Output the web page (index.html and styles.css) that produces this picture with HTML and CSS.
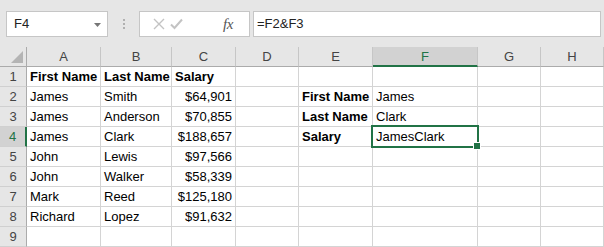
FILE: index.html
```html
<!DOCTYPE html>
<html>
<head>
<meta charset="utf-8">
<link rel="stylesheet" href="styles.css">
</head>
<body>
<div class="toolbar">
  <div class="namebox">
    <span class="name">F4</span>
    <svg class="dd" width="7" height="4" viewBox="0 0 7 4"><path d="M0 0H7L3.5 4Z" fill="#767676"/></svg>
  </div>
  <div class="grip"><i></i><i></i><i></i></div>
  <div class="fxbox">
    <svg class="ic" width="12" height="12" viewBox="0 0 12 12"><path d="M1 1L11 11M11 1L1 11" stroke="#c3c3c3" stroke-width="1.4" fill="none"/></svg>
    <svg class="ic chk" width="13" height="12" viewBox="0 0 13 12"><path d="M1 6.5L4.5 10L12 1.5" stroke="#c3c3c3" stroke-width="2" fill="none"/></svg>
    <span class="fx">fx</span>
  </div>
  <div class="formula">=F2&amp;F3</div>
</div>
<div class="sheet">
  <div class="grid">
    <div class="corner"><svg width="12" height="12" viewBox="0 0 12 12"><path d="M12 0V12H0Z" fill="#b4b4b4"/></svg></div>
    <div class="h">A</div><div class="h">B</div><div class="h">C</div><div class="h">D</div><div class="h">E</div><div class="h sel">F</div><div class="h">G</div><div class="h">H</div>

    <div class="r">1</div><div class="c b">First Name</div><div class="c b">Last Name</div><div class="c b">Salary</div><div class="c"></div><div class="c"></div><div class="c"></div><div class="c"></div><div class="c"></div>
    <div class="r">2</div><div class="c">James</div><div class="c">Smith</div><div class="c n">$64,901</div><div class="c"></div><div class="c b">First Name</div><div class="c">James</div><div class="c"></div><div class="c"></div>
    <div class="r">3</div><div class="c">James</div><div class="c">Anderson</div><div class="c n">$70,855</div><div class="c"></div><div class="c b">Last Name</div><div class="c">Clark</div><div class="c"></div><div class="c"></div>
    <div class="r rsel">4</div><div class="c">James</div><div class="c">Clark</div><div class="c n">$188,657</div><div class="c"></div><div class="c b">Salary</div><div class="c">JamesClark</div><div class="c"></div><div class="c"></div>
    <div class="r">5</div><div class="c">John</div><div class="c">Lewis</div><div class="c n">$97,566</div><div class="c"></div><div class="c"></div><div class="c"></div><div class="c"></div><div class="c"></div>
    <div class="r">6</div><div class="c">John</div><div class="c">Walker</div><div class="c n">$58,339</div><div class="c"></div><div class="c"></div><div class="c"></div><div class="c"></div><div class="c"></div>
    <div class="r">7</div><div class="c">Mark</div><div class="c">Reed</div><div class="c n">$125,180</div><div class="c"></div><div class="c"></div><div class="c"></div><div class="c"></div><div class="c"></div>
    <div class="r">8</div><div class="c">Richard</div><div class="c">Lopez</div><div class="c n">$91,632</div><div class="c"></div><div class="c"></div><div class="c"></div><div class="c"></div><div class="c"></div>
    <div class="r">9</div><div class="c"></div><div class="c"></div><div class="c"></div><div class="c"></div><div class="c"></div><div class="c"></div><div class="c"></div><div class="c"></div>
  </div>
  <div class="selbox"></div>
  <div class="handle"></div>
</div>
</body>
</html>
```

FILE: styles.css
```css
html, body {
  margin: 0;
  padding: 0;
  background: #ffffff;
  overflow: hidden;
}
body {
  width: 604px;
  height: 247px;
  font-family: "Liberation Sans", Arial, sans-serif;
  font-size: 13px;
  color: #000;
}
.toolbar {
  height: 47px;
  box-sizing: border-box;
  background: #e6e6e6;
  display: flex;
  align-items: flex-start;
  padding: 11px 3px 0 6px;
}
.namebox {
  width: 102px;
  height: 26px;
  box-sizing: border-box;
  background: #fff;
  border: 1px solid #c6c6c6;
  display: flex;
  align-items: center;
  justify-content: space-between;
  padding: 0 6px 0 7px;
  color: #222;
}
.name { line-height: 24px; }
.dd { margin-top: 1px; }
.grip {
  width: 31px;
  height: 26px;
  display: flex;
  flex-direction: column;
  align-items: center;
  justify-content: center;
  gap: 2px;
}
.grip i {
  display: block;
  width: 2px;
  height: 2px;
  background: #b0b0b0;
}
.fxbox {
  width: 111px;
  height: 26px;
  box-sizing: border-box;
  background: #fff;
  border: 1px solid #c6c6c6;
  display: flex;
  align-items: center;
  padding-left: 13px;
}
.chk { margin-left: 5px; }
.fx {
  margin-left: 40px;
  font-family: "Liberation Serif", "Times New Roman", serif;
  font-style: italic;
  font-size: 15px;
  color: #555;
  letter-spacing: -0.5px;
}
.formula {
  flex: 1;
  margin-left: 3px;
  height: 26px;
  box-sizing: border-box;
  background: #fff;
  border: 1px solid #c6c6c6;
  padding-left: 3px;
  line-height: 24px;
  color: #222;
}
.sheet {
  position: relative;
}
.grid {
  display: grid;
  grid-template-columns: 27px 74px 71px 64px 63px 74px 105px 63px 1fr;
  grid-auto-rows: 20px;
}
.grid > div {
  box-sizing: border-box;
  white-space: nowrap;
  overflow: hidden;
  line-height: 19px;
}
.corner {
  background: #e6e6e6;
  border-right: 1px solid #ababab;
  border-bottom: 1px solid #ababab;
  display: flex;
  align-items: flex-end;
  justify-content: flex-end;
  padding: 0 3px 3px 0;
}
.corner svg { display: block; }
.h {
  background: #e6e6e6;
  border-right: 1px solid #c6c6c6;
  border-bottom: 1px solid #ababab;
  text-align: center;
  color: #444;
}
.h.sel {
  background: #d2d2d2;
  border-bottom: 2px solid #217346;
  color: #217346;
}
.r {
  background: #e6e6e6;
  border-right: 1px solid #ababab;
  border-bottom: 1px solid #d0d0d0;
  text-align: center;
  color: #444;
}
.r.rsel {
  background: #d2d2d2;
  border-right: 2px solid #217346;
  color: #217346;
}
.c {
  border-right: 1px solid #d4d4d4;
  border-bottom: 1px solid #d4d4d4;
  padding: 0 3px;
}
.b { font-weight: bold; }
.n { text-align: right; }
.selbox {
  position: absolute;
  left: 371px;
  top: 78px;
  width: 108px;
  height: 23px;
  box-sizing: border-box;
  border: 2px solid #217346;
}
.handle {
  position: absolute;
  left: 474px;
  top: 96px;
  width: 6px;
  height: 6px;
  background: #217346;
  box-shadow: 0 0 0 1px #fff;
}
```
